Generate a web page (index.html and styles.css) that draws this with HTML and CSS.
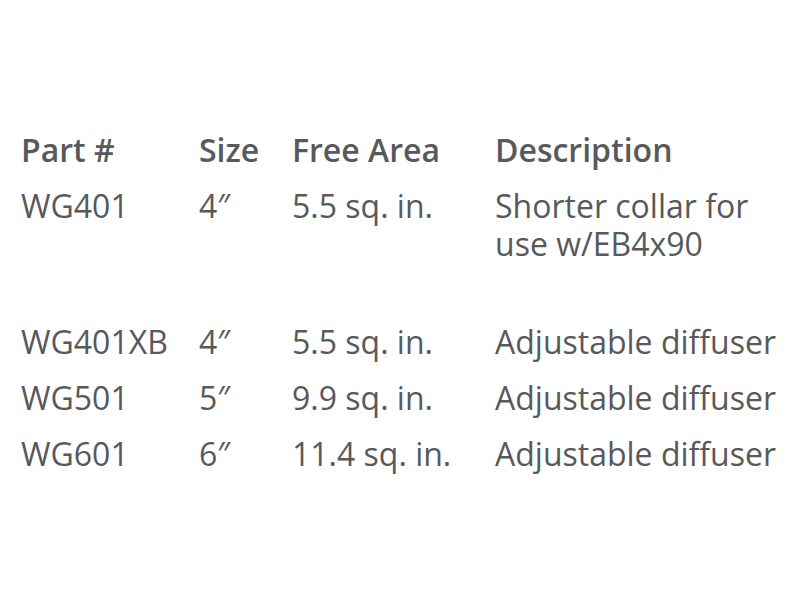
FILE: index.html
```html
<!DOCTYPE html>
<html>
<head>
<meta charset="utf-8">
<link rel="stylesheet" href="styles.css">
</head>
<body>
<table class="parts">
  <thead>
    <tr>
      <th class="c-part">Part #</th>
      <th class="c-size">Size</th>
      <th class="c-area">Free Area</th>
      <th class="c-desc">Description</th>
    </tr>
  </thead>
  <tbody>
    <tr class="row-tall">
      <td>WG401</td>
      <td>4″</td>
      <td>5.5 sq. in.</td>
      <td>Shorter collar for<br>use w/EB4x90</td>
    </tr>
    <tr>
      <td>WG401XB</td>
      <td>4″</td>
      <td>5.5 sq. in.</td>
      <td>Adjustable diffuser</td>
    </tr>
    <tr>
      <td>WG501</td>
      <td>5″</td>
      <td>9.9 sq. in.</td>
      <td>Adjustable diffuser</td>
    </tr>
    <tr>
      <td>WG601</td>
      <td>6″</td>
      <td>11.4 sq. in.</td>
      <td>Adjustable diffuser</td>
    </tr>
  </tbody>
</table>
</body>
</html>
```
FILE: styles.css
```css
html, body {
  margin: 0;
  padding: 0;
  background: #ffffff;
}
body {
  font-family: "Open Sans", "Noto Sans", sans-serif;
  color: #58595b;
}
.parts {
  border-collapse: collapse;
  margin: 122px 0 0 21px;
  font-size: 32px;
  line-height: 38px;
  table-layout: fixed;
  width: 779px;
}
.parts th,
.parts td {
  padding: 9px 0;
  text-align: left;
  vertical-align: top;
  white-space: nowrap;
}
.parts th {
  font-weight: 600;
}
.c-part { width: 178px; }
.c-size { width: 93px; }
.c-area { width: 203px; }
.row-tall td {
  padding-bottom: 51px;
}
```
